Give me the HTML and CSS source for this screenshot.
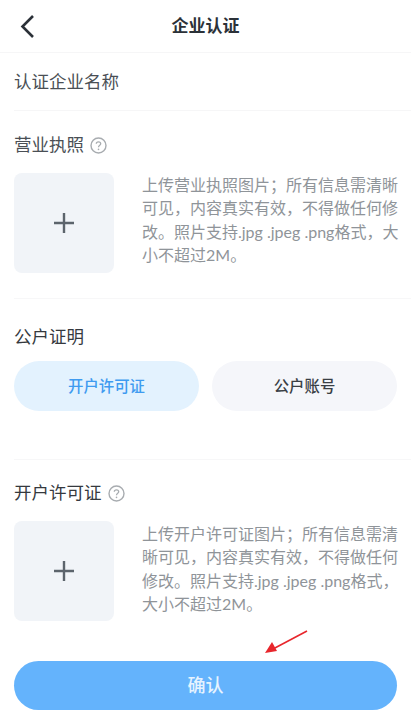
FILE: index.html
```html
<!DOCTYPE html>
<html lang="zh-CN">
<head>
<meta charset="utf-8">
<title>企业认证</title>
<link rel="stylesheet" href="styles.css">
</head>
<body>
<div class="page">
  <header class="nav">
    <svg class="back" width="16" height="24" viewBox="0 0 16 24"><path d="M14 2 L3.5 12.5 L14 23" fill="none" stroke="#2b3138" stroke-width="2.6"/></svg>
    <h1 class="title">企业认证</h1>
  </header>
  <div class="name-row">认证企业名称</div>
  <section class="license">
    <div class="label">营业执照<svg class="help" width="17" height="17" viewBox="0 0 17 17"><circle cx="8.5" cy="8.5" r="7.5" fill="none" stroke="#a8acb0" stroke-width="1.4"/><path d="M6.3 6.8 C6.3 4.2 10.7 4.2 10.7 6.8 C10.7 8.4 8.5 8.2 8.5 10.2" fill="none" stroke="#a8acb0" stroke-width="1.3"/><circle cx="8.5" cy="12.4" r=".8" fill="#a8acb0"/></svg></div>
    <div class="upload-row">
      <div class="upload"><svg width="20" height="20" viewBox="0 0 20 20"><path d="M10 0V20M0 10H20" stroke="#5c646c" stroke-width="2.4"/></svg></div>
      <p class="hint">上传营业执照图片；所有信息需清晰可见，内容真实有效，不得做任何修改。照片支持.jpg .jpeg .png格式，大小不超过2M。</p>
    </div>
  </section>
  <section class="account">
    <div class="label dark">公户证明</div>
    <div class="tabs">
      <div class="tab active">开户许可证</div>
      <div class="tab">公户账号</div>
    </div>
  </section>
  <section class="permit">
    <div class="label dark">开户许可证<svg class="help" width="17" height="17" viewBox="0 0 17 17"><circle cx="8.5" cy="8.5" r="7.5" fill="none" stroke="#a8acb0" stroke-width="1.4"/><path d="M6.3 6.8 C6.3 4.2 10.7 4.2 10.7 6.8 C10.7 8.4 8.5 8.2 8.5 10.2" fill="none" stroke="#a8acb0" stroke-width="1.3"/><circle cx="8.5" cy="12.4" r=".8" fill="#a8acb0"/></svg></div>
    <div class="upload-row">
      <div class="upload"><svg width="20" height="20" viewBox="0 0 20 20"><path d="M10 0V20M0 10H20" stroke="#5c646c" stroke-width="2.4"/></svg></div>
      <p class="hint">上传开户许可证图片；所有信息需清晰可见，内容真实有效，不得做任何修改。照片支持.jpg .jpeg .png格式，大小不超过2M。</p>
    </div>
  </section>
  <button class="confirm">确认</button>
  <svg class="arrow" width="46" height="26" viewBox="0 0 46 26"><path d="M43 1 L9 19" stroke="#e8262c" stroke-width="1.6" fill="none"/><path d="M1 23 L8 12 L13 21 Z" fill="#e8262c"/></svg>
</div>
</body>
</html>
```

FILE: styles.css
```css
* { box-sizing: border-box; }
html, body { margin: 0; padding: 0; background: #fff; }
body { font-family: Roboto, "Noto Sans CJK SC", sans-serif; color: #31363c; }
.page { position: relative; width: 411px; height: 720px; overflow: hidden; }
.nav { height: 53px; display: flex; align-items: center; justify-content: center; position: relative; border-bottom: 1px solid #f6f6f7; padding-bottom: 1px; }
.back { position: absolute; left: 19px; top: 14px; }
.title { margin: 0; font-size: 17px; font-weight: 600; color: #2b3138; line-height: 24px; }
.name-row { margin: 0 0 0 14px; height: 58px; padding-top: 16px; font-size: 17.5px; line-height: 26px; color: #4a4f55; border-bottom: 1px solid #f6f6f7; }
.label { display: flex; align-items: center; gap: 6px; font-size: 17.5px; line-height: 26px; color: #4a4f55; }
.label.dark { color: #35393e; }
.help { flex: none; }
.license { margin: 0 0 0 14px; padding-top: 21px; height: 188px; border-bottom: 1px solid #f7f7f8; }
.upload-row { display: flex; gap: 28px; margin-top: 15px; }
.upload { flex: none; width: 100px; height: 100px; border-radius: 8px; background: #f1f4f8; display: flex; align-items: center; justify-content: center; }
.hint { margin: 0; width: 261px; font-family: Lato, "Noto Sans CJK SC", sans-serif; font-size: 16px; line-height: 23.4px; color: #8f9499; }
.account { margin-left: 14px; height: 161px; padding-top: 25px; border-bottom: 1px solid #f7f7f8; }
.tabs { display: flex; gap: 13px; margin-top: 11px; }
.tab { width: 185px; height: 50px; border-radius: 25px; background: #f5f6fa; display: flex; align-items: center; justify-content: center; padding-bottom: 3px; font-size: 15.4px; font-weight: 500; color: #3a3f45; }
.tab.active { background: #e3f2fe; color: #3f9bf0; }
.permit { margin-left: 14px; padding-top: 20px; height: 201px; }
.permit .hint { margin-top: 1px; }
.confirm { display: block; width: 383px; height: 49px; margin-left: 14px; padding: 0 0 4px; border: 0; border-radius: 25px; background: #64b3fc; color: #e6f3ff; font-family: inherit; font-size: 18px; font-weight: 500; }
.arrow { position: absolute; left: 264px; top: 630px; }
```
